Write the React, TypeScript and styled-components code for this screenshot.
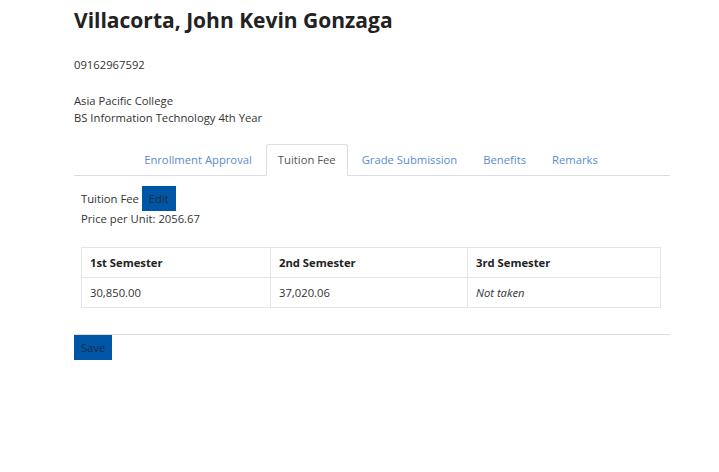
import styled, { createGlobalStyle } from 'styled-components';

const GlobalStyle = createGlobalStyle`
  body {
    margin: 0;
    background: #fff;
    font-family: 'Open Sans', 'Liberation Sans', sans-serif;
    font-size: 11.25px;
    color: #333;
  }
`;

const Page = styled.div`
  width: 596px;
  padding: 8px 0 0 74px;
`;

const Name = styled.h1`
  margin: 0;
  font-size: 21px;
  line-height: 24px;
  font-weight: 700;
  color: #222;
`;

const Info = styled.p<{ $top: number }>`
  margin: ${(p) => p.$top}px 0 0;
  line-height: 17px;
`;

const TabList = styled.ul`
  display: flex;
  justify-content: center;
  list-style: none;
  margin: 18px 0 0;
  padding: 0;
  border-bottom: 1px solid #ddd;
`;

const Tab = styled.li<{ $active?: boolean }>`
  margin: 0 2px -1px 0;
  padding: 0 11px;
  height: 30px;
  line-height: 30px;
  color: ${(p) => (p.$active ? '#555' : '#5a8ccc')};
  border: 1px solid ${(p) => (p.$active ? '#ddd' : 'transparent')};
  border-bottom-color: ${(p) => (p.$active ? '#fff' : 'transparent')};
  border-radius: 3px 3px 0 0;
  background: ${(p) => (p.$active ? '#fff' : 'transparent')};
`;

const Panel = styled.div`
  padding: 10px 9px 0 7px;
`;

const FeeRow = styled.div`
  display: flex;
  align-items: center;
  gap: 3px;
`;

const BlueButton = styled.button`
  height: 25px;
  padding: 0 7px;
  border: none;
  border-radius: 0;
  background: #0056a6;
  color: #1c2b3f;
  font-family: inherit;
  font-size: 11.25px;
`;

const Price = styled.div`
  margin-top: -1px;
  line-height: 17px;
`;

const Table = styled.table`
  width: 100%;
  margin-top: 20px;
  border-collapse: collapse;
  table-layout: fixed;

  th,
  td {
    height: 29px;
    padding: 0 8px;
    border: 1px solid #e5e5e5;
    text-align: left;
  }
  th {
    font-weight: 700;
    color: #222;
  }
`;

const Italic = styled.td`
  font-style: italic;
`;

const Rule = styled.hr`
  margin: 26px 0 0;
  border: none;
  border-top: 1px solid #ddd;
`;

const tabs = ['Enrollment Approval', 'Tuition Fee', 'Grade Submission', 'Benefits', 'Remarks'];

export default function App() {
  return (
    <>
      <GlobalStyle />
      <Page>
        <Name>Villacorta, John Kevin Gonzaga</Name>
        <Info $top={24}>09162967592</Info>
        <Info $top={19}>
          Asia Pacific College
          <br />
          BS Information Technology 4th Year
        </Info>

        <TabList>
          {tabs.map((t) => (
            <Tab key={t} $active={t === 'Tuition Fee'}>
              {t}
            </Tab>
          ))}
        </TabList>

        <Panel>
          <FeeRow>
            Tuition Fee <BlueButton>Edit</BlueButton>
          </FeeRow>
          <Price>Price per Unit: 2056.67</Price>
          <Table>
            <colgroup>
              <col style={{ width: 189 }} />
              <col style={{ width: 197 }} />
              <col />
            </colgroup>
            <thead>
              <tr>
                <th>1st Semester</th>
                <th>2nd Semester</th>
                <th>3rd Semester</th>
              </tr>
            </thead>
            <tbody>
              <tr>
                <td>30,850.00</td>
                <td>37,020.06</td>
                <Italic>Not taken</Italic>
              </tr>
            </tbody>
          </Table>
        </Panel>

        <Rule />
        <BlueButton>Save</BlueButton>
      </Page>
    </>
  );
}
